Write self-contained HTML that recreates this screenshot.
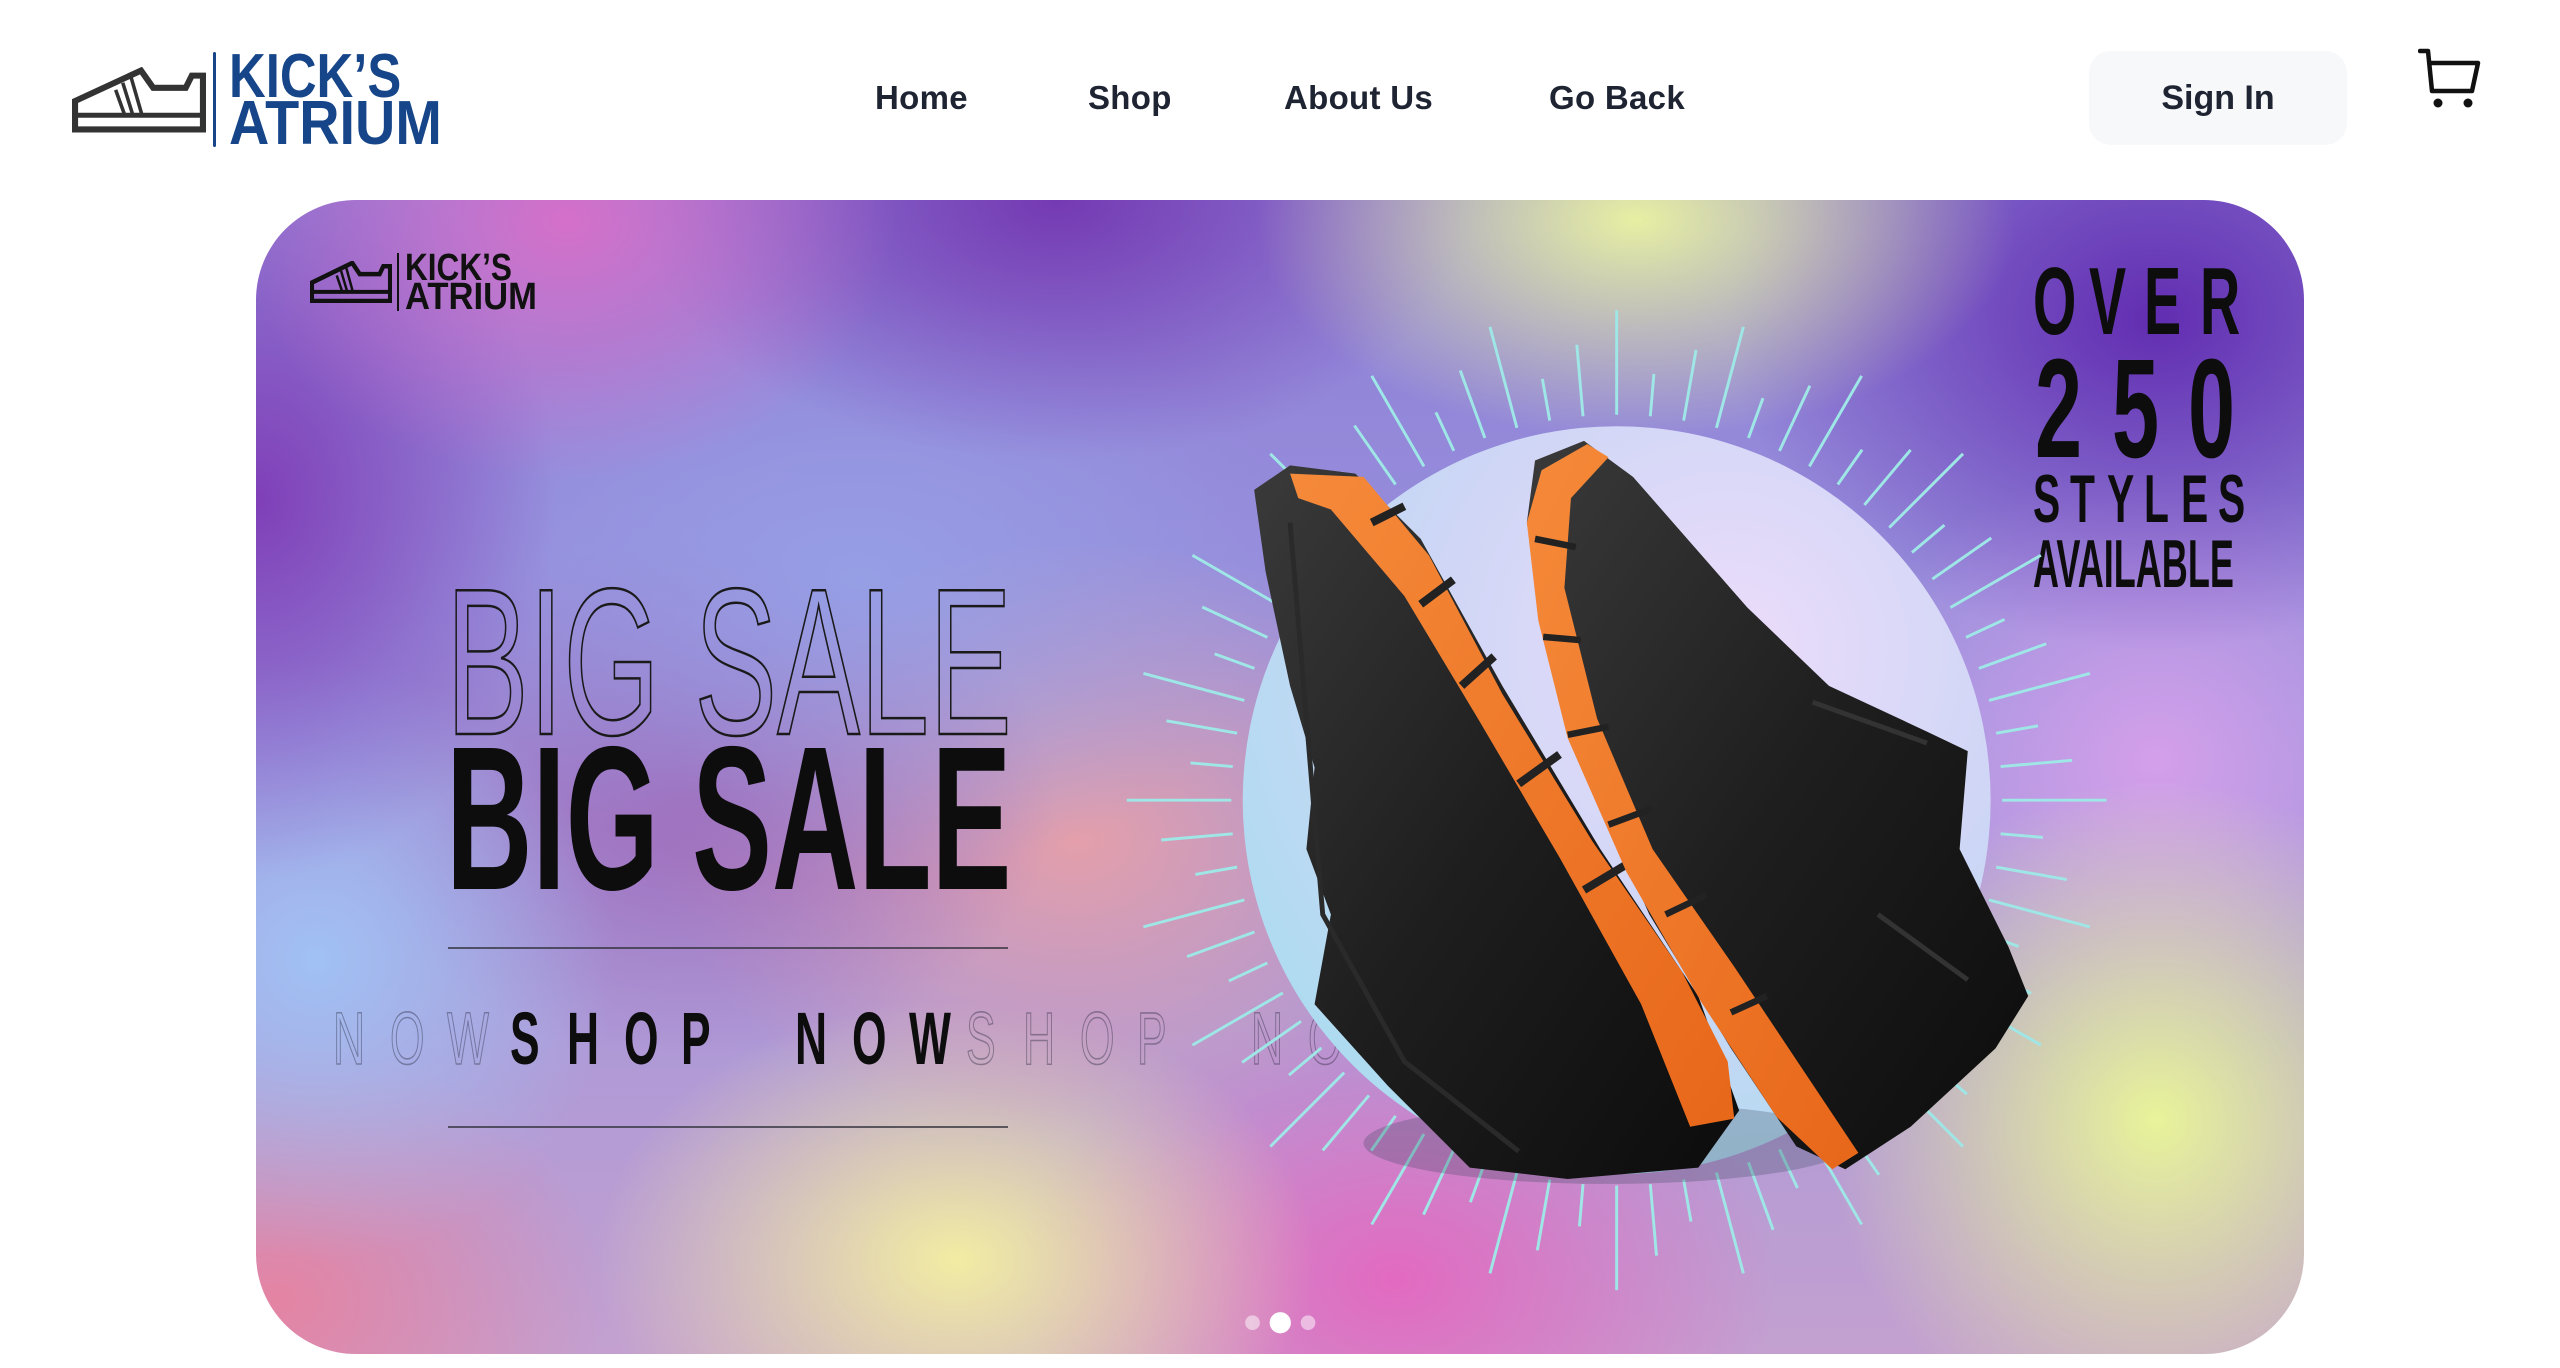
<!DOCTYPE html>
<html><head><meta charset="utf-8">
<style>
*{margin:0;padding:0;box-sizing:border-box}
html,body{width:2560px;height:1368px;background:#fff;overflow:hidden;font-family:"Liberation Sans",sans-serif}
.abs{position:absolute}
.nav{position:absolute;top:78px;font-size:33px;font-weight:bold;color:#1f2433;line-height:40px;letter-spacing:0.3px}
.banner{position:absolute;left:256px;top:200px;width:2048px;height:1154px;border-radius:100px;overflow:hidden;
background:
radial-gradient(ellipse 330px 260px at 310px 20px,rgba(220,110,200,.9),transparent),
radial-gradient(ellipse 380px 220px at 1380px 20px,rgba(235,245,160,.95),transparent),
radial-gradient(ellipse 420px 260px at 800px 0px,rgba(110,40,170,.8),transparent),
radial-gradient(ellipse 430px 330px at 1900px 120px,rgba(95,40,175,.95),transparent),
radial-gradient(ellipse 300px 380px at 0px 300px,rgba(125,55,180,.9),transparent),
radial-gradient(ellipse 450px 300px at 600px 380px,rgba(150,160,230,.9),transparent),
radial-gradient(ellipse 300px 300px at 60px 760px,rgba(160,195,245,.95),transparent),
radial-gradient(ellipse 360px 260px at 440px 600px,rgba(160,100,180,.85),transparent),
radial-gradient(ellipse 420px 300px at 820px 640px,rgba(235,160,165,.9),transparent),
radial-gradient(ellipse 330px 260px at 20px 1100px,rgba(230,130,160,.95),transparent),
radial-gradient(ellipse 360px 260px at 700px 1060px,rgba(245,240,160,.95),transparent),
radial-gradient(ellipse 380px 280px at 1140px 1080px,rgba(230,100,190,.9),transparent),
radial-gradient(ellipse 330px 340px at 1900px 920px,rgba(235,248,150,.95),transparent),
radial-gradient(ellipse 330px 300px at 1900px 560px,rgba(215,160,235,.95),transparent),
linear-gradient(180deg,#8e7fd6 0%,#9a93dd 45%,#c3a0d0 100%);}
.cond{display:inline-block;transform-origin:0 0;white-space:nowrap}
.ltr{position:absolute;top:0;font-weight:bold;transform-origin:0 0}
</style></head><body>

<svg class="abs" style="left:72px;top:67px" width="134" height="66" viewBox="0 0 132 64">
<path d="M3,61 L3,33 L68,3 L80,20 L112,20 L118,8 L129,8 L129,61 Z" fill="none" stroke="#333" stroke-width="6" stroke-linejoin="miter"/>
<path d="M3,47 H129" stroke="#333" stroke-width="5"/>
<path d="M43,22 L52,47 M50,15 L60,47 M58,9 L69,47" stroke="#333" stroke-width="3.5"/>
</svg>
<div class="abs" style="left:213px;top:52px;width:3px;height:95px;background:#164589;border-radius:2px"></div>
<div class="abs" style="left:229px;top:46px;color:#164589;font-weight:bold;font-size:62px;line-height:1">
<span class="cond" style="transform:scaleX(.82)">KICK’S</span></div>
<div class="abs" style="left:229px;top:93px;color:#164589;font-weight:bold;font-size:62px;line-height:1">
<span class="cond" style="transform:scaleX(.9)">ATRIUM</span></div>

<div class="nav" style="left:875px">Home</div>
<div class="nav" style="left:1088px">Shop</div>
<div class="nav" style="left:1284px">About Us</div>
<div class="nav" style="left:1549px">Go Back</div>

<div class="abs" style="left:2089px;top:51px;width:258px;height:94px;background:#f7f8fa;border-radius:22px;font-size:34px;font-weight:bold;color:#1f2433;line-height:94px;text-align:center">Sign In</div>

<svg class="abs" style="left:2418px;top:47px" width="66" height="62" viewBox="0 0 66 62">
<path d="M2,4 H10 L14,44 H54 L60,16 H12" fill="none" stroke="#111" stroke-width="4.5" stroke-linejoin="round" stroke-linecap="round"/>
<circle cx="20" cy="56" r="4.5" fill="#111"/><circle cx="50" cy="56" r="4.5" fill="#111"/>
</svg>

<div class="banner">
 <svg class="abs" style="left:54px;top:61px" width="82" height="42" viewBox="0 0 132 64" preserveAspectRatio="none">
 <path d="M3,61 L3,33 L68,3 L80,20 L112,20 L118,8 L129,8 L129,61 Z" fill="none" stroke="#111" stroke-width="7"/>
 <path d="M3,47 H129" stroke="#111" stroke-width="6"/>
 <path d="M43,22 L52,47 M50,15 L60,47 M58,9 L69,47" stroke="#111" stroke-width="4"/>
 </svg>
 <div class="abs" style="left:141px;top:53px;width:2px;height:58px;background:#111"></div>
 <div class="abs" style="left:149px;top:49px;font-weight:bold;font-size:38px;line-height:1;color:#111"><span class="cond" style="transform:scaleX(.83)">KICK’S</span></div>
 <div class="abs" style="left:149px;top:78px;font-weight:bold;font-size:38px;line-height:1;color:#111"><span class="cond" style="transform:scaleX(.91)">ATRIUM</span></div>

 <div class="abs" style="left:190px;top:358px;font-size:209px;line-height:1;color:transparent;-webkit-text-stroke:2.5px #1a1a1a"><span class="cond" style="transform:scaleX(.594)">BIG SALE</span></div>
 <div class="abs" style="left:190px;top:516px;font-size:205px;line-height:1;font-weight:bold;color:#0d0d0d"><span class="cond" style="transform:scaleX(.584)">BIG SALE</span></div>
 <div class="abs" style="left:192px;top:747px;width:560px;height:2px;background:rgba(50,50,60,.75)"></div>
 <div class="abs" style="left:192px;top:926px;width:560px;height:2px;background:rgba(50,50,60,.75)"></div>

 <div id="shop" class="abs" style="left:0;top:802px;width:2048px;height:80px;font-size:74px;line-height:1"></div>
 <div id="over" class="abs" style="left:0;top:0"></div>
</div>

<svg class="abs" style="left:0;top:0" width="2560" height="1368" viewBox="0 0 2560 1368">
<defs>
<radialGradient id="cg" cx="0.65" cy="0.3" r="0.8">
<stop offset="0" stop-color="#ecdcfa"/><stop offset="0.5" stop-color="#cfd6f6"/><stop offset="1" stop-color="#a9dcef"/></radialGradient>
<linearGradient id="og" x1="0" y1="0" x2="1" y2="1"><stop offset="0" stop-color="#f58a3a"/><stop offset="1" stop-color="#e8671a"/></linearGradient>
<linearGradient id="bg1" x1="0" y1="0" x2="1" y2="1"><stop offset="0" stop-color="#3a3a3a"/><stop offset=".5" stop-color="#1e1e1e"/><stop offset="1" stop-color="#0c0c0c"/></linearGradient>
</defs>
<g transform="scale(1.633)">
<g id="rays" stroke="#9fe6e6" stroke-width="1.8"></g>
<circle cx="990" cy="490" r="229" fill="url(#cg)"/>
<ellipse cx="985" cy="700" rx="150" ry="25" fill="rgba(40,60,80,.25)"/>
<polygon fill="url(#bg1)" points="768,300 790,285 830,290 870,330 920,420 980,520 1040,610 1065,680 1040,715 960,722 900,715 850,665 805,615 815,560 800,520 805,470 790,420 775,350"/>
<polygon fill="url(#og)" points="790,290 835,292 875,340 920,425 975,515 1030,595 1058,650 1062,685 1035,690 1005,615 955,525 905,440 860,365 815,312 795,305"/>
<g stroke="#222" stroke-width="5" fill="none"><path d="M840,320 L860,310 M870,370 L890,355 M895,420 L915,402 M930,480 L955,462 M970,545 L995,530"/></g>
<path d="M790,320 L810,560 L860,650 L930,705" stroke="#2a2a2a" stroke-width="3" fill="none"/>
<polygon fill="url(#bg1)" points="940,282 970,270 1000,292 1070,372 1120,420 1180,448 1205,460 1200,520 1230,580 1242,610 1222,642 1170,690 1130,716 1100,702 1060,642 1010,560 970,470 945,380 935,320"/>
<polygon fill="url(#og)" points="944,288 972,272 985,280 962,305 958,360 978,440 1012,520 1062,592 1102,652 1138,706 1122,716 1088,684 1042,614 996,534 960,452 942,380 935,320"/>
<g stroke="#222" stroke-width="4" fill="none"><path d="M940,330 L965,335 M945,390 L968,392 M960,450 L985,445 M985,505 L1012,495 M1020,560 L1045,548 M1060,620 L1082,610"/></g>
<path d="M1110,430 L1180,455 M1150,560 L1205,600" stroke="#333" stroke-width="3" fill="none"/>
<circle cx="767" cy="810" r="4.5" fill="rgba(255,255,255,.5)"/>
<circle cx="784" cy="810" r="6.5" fill="#fff"/>
<circle cx="801" cy="810" r="4.5" fill="rgba(255,255,255,.5)"/>
</g>
</svg>

<script>
var g=document.getElementById('rays'),s='';
for(var i=0;i<72;i++){var a=i*5*Math.PI/180,L=(i%3==0)?300:(i%3==1?262:280);
var r0=236;s+='<line x1="'+(990+r0*Math.cos(a)).toFixed(1)+'" y1="'+(490+r0*Math.sin(a)).toFixed(1)+'" x2="'+(990+L*Math.cos(a)).toFixed(1)+'" y2="'+(490+L*Math.sin(a)).toFixed(1)+'"/>';}
g.innerHTML=s;
var t="SHOP NOW",h='';
for(var k=-6;k<=14;k++){var c=t[((k%8)+8)%8];if(c==' ')continue;var x=254+57*k;
if(k<0)x-=6;
var st=(k>=0&&k<=7)?'color:#0d0d0d;font-weight:bold':'color:transparent;font-weight:normal;-webkit-text-stroke:1.6px rgba(40,40,60,.4)';
h+='<span class="ltr" style="left:'+x+'px;'+st+';transform:scaleX(.6)">'+c+'</span>';}
document.getElementById('shop').innerHTML=h;
function line(txt,left,top,size,width,sc){var o='',n=txt.length,slot=width/n;
for(var j=0;j<n;j++){o+='<span class="ltr" style="left:'+(left+j*slot)+'px;top:'+top+'px;font-size:'+size+'px;line-height:1;color:#0d0d0d;transform:scaleX('+sc+')">'+txt[j]+'</span>';}return o;}
var ov=line("OVER",1777,54,96,222,.58)+line("250",1779,138,141,230,.6)+line("STYLES",1777,265,68,222,.6)
+'<span class="ltr" style="left:1777px;top:330px;font-size:68px;line-height:1;color:#0d0d0d;transform:scaleX(.53)">AVAILABLE</span>';
document.getElementById('over').innerHTML=ov;
</script>
</body></html>
